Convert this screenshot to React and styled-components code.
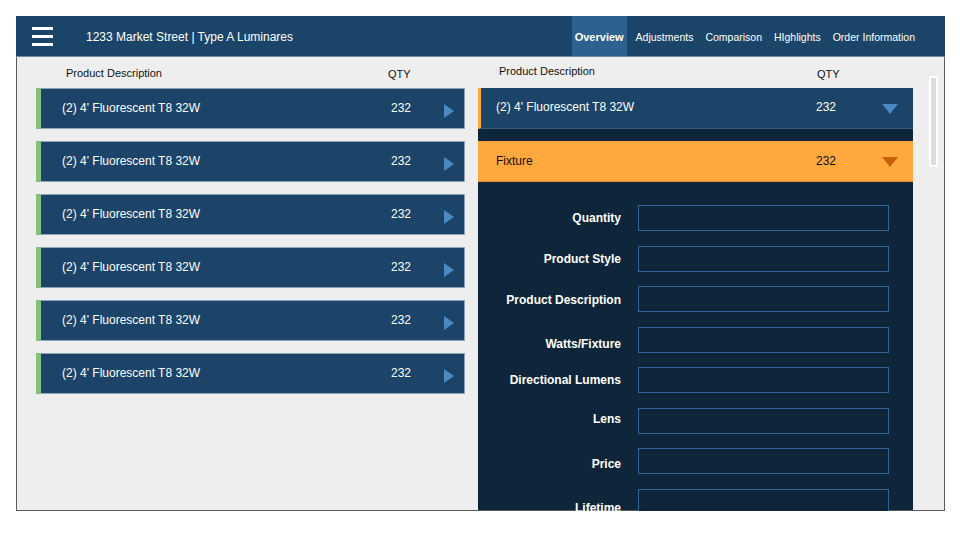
import styled, { createGlobalStyle } from "styled-components";

const GlobalStyle = createGlobalStyle`
  * { box-sizing: border-box; }
  body {
    margin: 0;
    background: #ffffff;
    font-family: "Liberation Sans", Arial, sans-serif;
  }
`;

const Frame = styled.div`
  margin: 16px 0 0 16px;
  width: 929px;
  height: 495px;
  border: 1px solid #5c5c5c;
  border-top: 0;
  display: flex;
  flex-direction: column;
  background: #eeeeee;
`;

const Header = styled.header`
  height: 41px;
  flex: none;
  margin: 0 -1px;
  background: #1b4568;
  border-bottom: 1px solid #6f8aa3;
  display: flex;
  align-items: stretch;
  color: #ffffff;
`;

const Burger = styled.button`
  width: 70px;
  padding: 0 0 0 16px;
  border: 0;
  background: none;
  display: flex;
  flex-direction: column;
  justify-content: center;
  gap: 5px;
  cursor: pointer;

  span {
    display: block;
    width: 21px;
    height: 3px;
    background: #ffffff;
  }
`;

const Title = styled.div`
  font-size: 12px;
  display: flex;
  align-items: center;
  padding-top: 2px;
  flex: 1;
`;

const Nav = styled.nav`
  display: flex;
  align-items: stretch;
  padding-right: 24px;
`;

const Tab = styled.a`
  display: flex;
  align-items: center;
  padding: 2px ${(p) => (p.$active ? "3px" : "6px")} 0;
  margin-right: ${(p) => (p.$active ? "3px" : "0")};
  font-size: ${(p) => (p.$active ? "11px" : "10.5px")};
  font-weight: ${(p) => (p.$active ? "bold" : "normal")};
  background: ${(p) => (p.$active ? "#2d6190" : "transparent")};
  color: #ffffff;
  text-decoration: none;
  white-space: nowrap;
`;

const Body = styled.main`
  flex: 1;
  min-height: 0;
  display: grid;
  grid-template-columns: 429px 435px 1fr;
  column-gap: 13px;
  padding-left: 19px;
`;

const Column = styled.section`
  display: flex;
  flex-direction: column;
  min-height: 0;
`;

const ColumnHead = styled.div`
  height: 31px;
  flex: none;
  display: flex;
  align-items: center;
  font-size: 11px;
  color: #111111;
  padding-left: ${(p) => p.$indent}px;

  span:first-child {
    margin-bottom: ${(p) => p.$lift}px;
  }

  span:last-child {
    margin-left: ${(p) => p.$qty}px;
    padding-top: 2px;
  }
`;

const List = styled.div`
  display: flex;
  flex-direction: column;
  gap: 12px;
`;

const ItemRow = styled.div`
  height: 41px;
  display: flex;
  align-items: flex-start;
  background: #1b4468;
  border: 1px solid #8da3b7;
  border-left: 5px solid #86c17a;
  color: #ffffff;
  font-size: 12px;
  padding: 12px 10px 0 21px;
`;

const Desc = styled.span`
  width: 329px;
`;

const Qty = styled.span`
  flex: none;
`;

const TriRight = styled.span`
  margin: 3px 0 0 auto;
  width: 0;
  height: 0;
  border-top: 7px solid transparent;
  border-bottom: 7px solid transparent;
  border-left: 10px solid #4b89c3;
`;

const Detail = styled.div`
  flex: 1;
  min-height: 0;
  background: #0f2539;
  display: flex;
  flex-direction: column;
  gap: 12px;
`;

const AccordionHead = styled.div`
  height: 41px;
  flex: none;
  display: flex;
  align-items: flex-start;
  padding: ${(p) => (p.$open ? "13px" : "12px")} 15px 0
    ${(p) => (p.$open ? "18px" : "15px")};
  background: ${(p) => (p.$open ? "#ffa83e" : "#1b4468")};
  border-left: ${(p) => (p.$open ? "0" : "3px solid #ffa83e")};
  border-bottom: 1px solid ${(p) => (p.$open ? "#e38d2a" : "#35597a")};
  color: ${(p) => (p.$open ? "#111111" : "#ffffff")};
  font-size: 12px;

  ${Desc} {
    width: 320px;
  }
`;

const TriDown = styled.span`
  margin: ${(p) => (p.$open ? "3px" : "4px")} 0 0 auto;
  width: 0;
  height: 0;
  border-left: 8px solid transparent;
  border-right: 8px solid transparent;
  border-top: 10px solid ${(p) => p.$color};
`;

const Section = styled.div`
  flex: none;
`;

const Form = styled.form`
  display: grid;
  grid-template-columns: 143px 251px;
  column-gap: 17px;
  row-gap: 14.5px;
  padding-top: 23px;
`;

const Label = styled.label`
  text-align: right;
  white-space: nowrap;
  align-self: center;
  font-size: 12px;
  font-weight: bold;
  color: #ffffff;
  margin-top: ${(p) => p.$shift || 0}px;
`;

const Field = styled.input`
  height: 26px;
  border: 1px solid #2f659b;
  background: #0f2539;
  color: #ffffff;
  font-size: 12px;
  padding: 0 6px;
  outline: none;
`;

const ScrollTrack = styled.div`
  display: flex;
  justify-content: flex-end;
  align-items: flex-start;
  padding: 19px 6px 0 0;
`;

const Thumb = styled.div`
  width: 9px;
  height: 91px;
  border: 2px solid #ffffff;
  background: #dcdce0;
  border-radius: 1px;
`;

const tabs = ["Overview", "Adjustments", "Comparison", "HIghlights", "Order Information"];

const items = Array.from({ length: 6 }, () => ({
  name: "(2) 4' Fluorescent T8 32W",
  qty: 232,
}));

const fields = [
  { label: "Quantity", shift: 0 },
  { label: "Product Style", shift: 1 },
  { label: "Product Description", shift: 2 },
  { label: "Watts/Fixture", shift: 8 },
  { label: "Directional Lumens", shift: -1 },
  { label: "Lens", shift: -3 },
  { label: "Price", shift: 6 },
  { label: "Lifetime", shift: 12 },
];

export default function App() {
  return (
    <>
      <GlobalStyle />
      <Frame>
        <Header>
          <Burger aria-label="Menu">
            <span />
            <span />
            <span />
          </Burger>
          <Title>1233 Market Street | Type A Luminares</Title>
          <Nav>
            {tabs.map((t, i) => (
              <Tab key={t} href="#" $active={i === 0}>
                {t}
              </Tab>
            ))}
          </Nav>
        </Header>

        <Body>
          <Column>
            <ColumnHead $indent={30} $qty={226} $lift={0}>
              <span>Product Description</span>
              <span>QTY</span>
            </ColumnHead>
            <List>
              {items.map((it, i) => (
                <ItemRow key={i}>
                  <Desc>{it.name}</Desc>
                  <Qty>{it.qty}</Qty>
                  <TriRight />
                </ItemRow>
              ))}
            </List>
          </Column>

          <Column>
            <ColumnHead $indent={21} $qty={222} $lift={4}>
              <span>Product Description</span>
              <span>QTY</span>
            </ColumnHead>
            <Detail>
              <AccordionHead>
                <Desc>(2) 4' Fluorescent T8 32W</Desc>
                <Qty>232</Qty>
                <TriDown $color="#4b89c3" />
              </AccordionHead>
              <Section>
                <AccordionHead $open>
                  <Desc>Fixture</Desc>
                  <Qty>232</Qty>
                  <TriDown $open $color="#c45f0b" />
                </AccordionHead>
                <Form onSubmit={(e) => e.preventDefault()}>
                  {fields.map((f) => [
                    <Label key={f.label + "-l"} $shift={f.shift}>
                      {f.label}
                    </Label>,
                    <Field key={f.label + "-f"} aria-label={f.label} />,
                  ])}
                </Form>
              </Section>
            </Detail>
          </Column>

          <ScrollTrack>
            <Thumb />
          </ScrollTrack>
        </Body>
      </Frame>
    </>
  );
}
